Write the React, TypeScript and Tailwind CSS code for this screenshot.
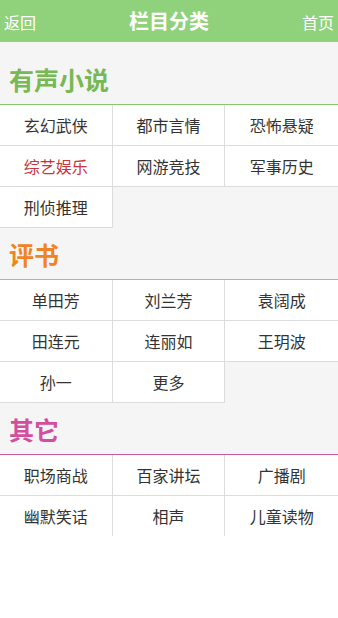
import React from "react";

type Item = { t: string; red?: boolean };

const sections: { title: string; color: string; line: string; items: Item[] }[] = [
  {
    title: "有声小说",
    color: "text-[#77b954]",
    line: "border-[#8cc46e]",
    items: [
      { t: "玄幻武侠" },
      { t: "都市言情" },
      { t: "恐怖悬疑" },
      { t: "综艺娱乐", red: true },
      { t: "网游竞技" },
      { t: "军事历史" },
      { t: "刑侦推理" },
    ],
  },
  {
    title: "评书",
    color: "text-[#ee8424]",
    line: "border-[#eea25a]",
    items: [
      { t: "单田芳" },
      { t: "刘兰芳" },
      { t: "袁阔成" },
      { t: "田连元" },
      { t: "连丽如" },
      { t: "王玥波" },
      { t: "孙一" },
      { t: "更多" },
    ],
  },
  {
    title: "其它",
    color: "text-[#d24e9e]",
    line: "border-[#c95a9d]",
    items: [
      { t: "职场商战" },
      { t: "百家讲坛" },
      { t: "广播剧" },
      { t: "幽默笑话" },
      { t: "相声" },
      { t: "儿童读物" },
    ],
  },
];

export default function App() {
  const font = { fontFamily: '"Noto Sans CJK SC", "Noto Sans", sans-serif' };
  return (
    <div className="w-[338px] min-h-[618px] bg-white" style={font}>
      <div className="h-[42px] bg-[#8fd27b] flex items-center justify-between px-[4px] text-white">
        <span className="text-[16px] leading-none pt-[2px]">返回</span>
        <span className="text-[20px] font-bold leading-none">栏目分类</span>
        <span className="text-[16px] leading-none pt-[2px]">首页</span>
      </div>
      <div className="bg-[#f5f5f5] pt-[11px]">
        {sections.map((s, si) => {
          const last = si === sections.length - 1;
          const n = s.items.length;
          return (
            <div key={s.title}>
              <div
                className={`h-[52px] flex items-center pl-[9px] pt-[1px] border-b ${s.line} ${s.color} text-[25px] font-bold leading-none`}
              >
                {s.title}
              </div>
              <div className="grid grid-cols-3">
                {s.items.map((it, i) => {
                  const noBottom = last && i >= n - 3;
                  return (
                    <div
                      key={it.t}
                      className={`bg-white flex items-center justify-center border-r border-[#dcdcdc] text-[16px] ${
                        noBottom ? "h-[40px]" : "h-[41px] border-b"
                      } ${it.red ? "text-[#c8333d]" : "text-[#333333]"} ${
                        i % 3 === 2 ? "border-r-0" : ""
                      }`}
                    >
                      {it.t}
                    </div>
                  );
                })}
              </div>
            </div>
          );
        })}
      </div>
    </div>
  );
}
